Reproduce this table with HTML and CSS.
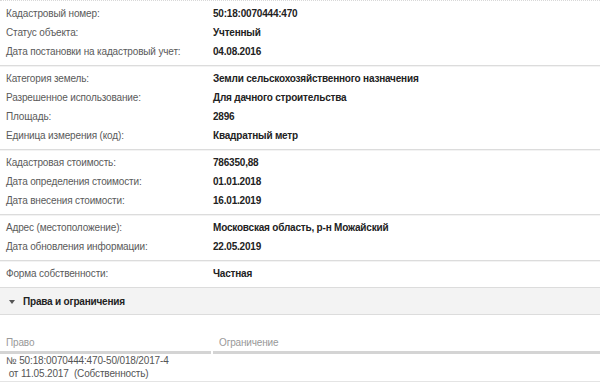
FILE: index.html
```html
<!DOCTYPE html>
<html lang="ru">
<head>
<meta charset="utf-8">
<link rel="stylesheet" href="styles.css">
</head>
<body>
<div class="page">
  <div class="section first">
    <div class="row"><span class="label">Кадастровый номер:</span><span class="value">50:18:0070444:470</span></div>
    <div class="row"><span class="label">Статус объекта:</span><span class="value">Учтенный</span></div>
    <div class="row"><span class="label">Дата постановки на кадастровый учет:</span><span class="value">04.08.2016</span></div>
  </div>
  <div class="section">
    <div class="row"><span class="label">Категория земель:</span><span class="value">Земли сельскохозяйственного назначения</span></div>
    <div class="row"><span class="label">Разрешенное использование:</span><span class="value">Для дачного строительства</span></div>
    <div class="row"><span class="label">Площадь:</span><span class="value">2896</span></div>
    <div class="row"><span class="label">Единица измерения (код):</span><span class="value">Квадратный метр</span></div>
  </div>
  <div class="section">
    <div class="row"><span class="label">Кадастровая стоимость:</span><span class="value">786350,88</span></div>
    <div class="row"><span class="label">Дата определения стоимости:</span><span class="value">01.01.2018</span></div>
    <div class="row"><span class="label">Дата внесения стоимости:</span><span class="value">16.01.2019</span></div>
  </div>
  <div class="section">
    <div class="row"><span class="label">Адрес (местоположение):</span><span class="value">Московская область, р-н Можайский</span></div>
    <div class="row"><span class="label">Дата обновления информации:</span><span class="value">22.05.2019</span></div>
  </div>
  <div class="section">
    <div class="row"><span class="label">Форма собственности:</span><span class="value">Частная</span></div>
  </div>
  <div class="band">
    <span class="tri"></span><span class="band-title">Права и ограничения</span>
  </div>
  <div class="table">
    <div class="thead">
      <div class="th th-left">Право</div>
      <div class="th th-right">Ограничение</div>
    </div>
    <div class="trow">
      <div class="td">№ 50:18:0070444:470-50/018/2017-4<br>&nbsp;от 11.05.2017 &nbsp;(Собственность)</div>
      <div class="td"></div>
    </div>
  </div>
</div>
</body>
</html>
```
FILE: styles.css
```css
html, body {
  margin: 0;
  padding: 0;
  background: #fff;
}
body {
  font-family: "Liberation Sans", Arial, sans-serif;
  font-size: 10px;
  letter-spacing: -0.15px;
  color: #555;
}
.page {
  width: 600px;
  height: 384px;
  overflow: hidden;
  border-top: 1px dotted #d8d8d8;
}
.section {
  padding: 3px 0 4px;
  border-bottom: 1px solid #dcdcdc;
  box-shadow: 0 1px 0 #f3f3f3;
}
.row {
  display: grid;
  grid-template-columns: 207px 1fr;
  height: 19px;
  line-height: 19px;
  padding-left: 6px;
}
.label {
  color: #5a5a5a;
}
.value {
  color: #222;
  font-weight: bold;
  letter-spacing: -0.2px;
}
.band {
  display: flex;
  align-items: center;
  height: 25px;
  background: #f3f3f3;
  border-bottom: 1px solid #dcdcdc;
  margin-top: 1px;
  padding-left: 9px;
}
.tri {
  width: 0;
  height: 0;
  border-left: 3px solid transparent;
  border-right: 3px solid transparent;
  border-top: 4px solid #555;
  margin-right: 8px;
}
.band-title {
  color: #222;
  font-weight: bold;
  letter-spacing: -0.2px;
}
.table {
  padding-top: 19px;
}
.thead {
  display: grid;
  grid-template-columns: 211px 1fr;
  column-gap: 2px;
}
.th {
  color: #999;
  line-height: 17px;
  border-bottom: 3px solid #d4d4d4;
}
.th-left {
  padding-left: 6px;
}
.th-right {
  padding-left: 6px;
}
.trow {
  display: grid;
  grid-template-columns: 213px 1fr;
  border-bottom: 1px solid #e4e4e4;
  padding: 0 0 1px;
}
.td {
  line-height: 13px;
  padding-left: 6px;
  color: #555;
}
```
